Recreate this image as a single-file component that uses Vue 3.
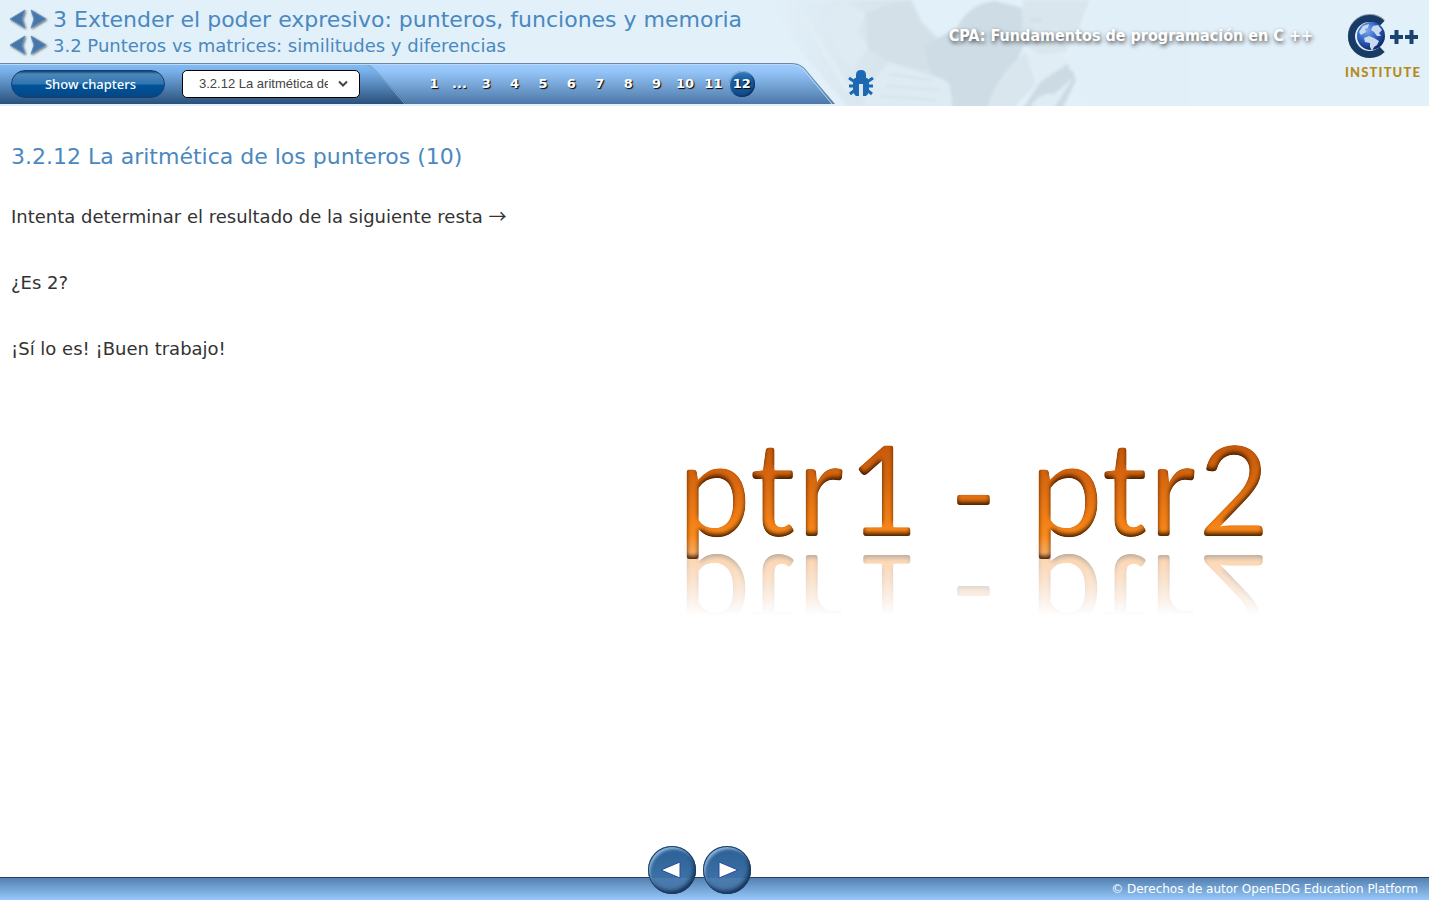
<script setup>
import { ref } from 'vue'

const pages = ['1', '...', '3', '4', '5', '6', '7', '8', '9', '10', '11', '12']
const current = ref('12')
const headings = [
  { level: 'chapter', text: '3 Extender el poder expresivo: punteros, funciones y memoria' },
  { level: 'section', text: '3.2 Punteros vs matrices: similitudes y diferencias' }
]
</script>

<template>
  <div class="page">
    <header class="header">
      <svg class="photo" width="430" height="106" viewBox="760 0 430 106" aria-hidden="true">
        <defs>
          <linearGradient id="fade">
            <stop offset="0" stop-color="#d9e5ed" stop-opacity="0" />
            <stop offset=".5" stop-color="#d7e4ec" />
            <stop offset="1" stop-color="#d3e0e9" />
          </linearGradient>
          <filter id="soft"><feGaussianBlur stdDeviation="1.500" /></filter>
        </defs>
        <g filter="url(#soft)">
          <path d="M770 0H912L922 22 938 38 957 30 1000 40V110H850L800 50Z" fill="url(#fade)" />
          <path d="M842 0 866 14 858 30 868 48 852 70 836 50 828 20Z" fill="#dfebf3" />
          <path d="M866 14 890 4 908 0 922 26 935 42 925 70 888 62 868 48Z" fill="#d3e0e8" />
          <path d="M957 28Q968 4 995 1L1022 8 1024 46 1014 66 986 110H953L950 84 930 72 925 45Z" fill="#cedce5" />
          <path d="M1023 0H1090L1078 30 1066 52 1040 54 1022 44Z" fill="#d9e6ee" />
          <path d="M1030 20h12M1032 36q8 4 16 0" stroke="#d0dee7" stroke-width="3" fill="none" />
          <path d="M1026 52L1036 84 1012 110H986Q994 84 1012 64Z" fill="#d9e6ee" />
          <path d="M1040 82L1070 62 1076 80 1062 110H1022Z" fill="#ccdae3" />
          <path d="M1026 52 1038 82 1068 64 1062 52 1046 54Z" fill="#e0edf5" />
          <path d="M1074 77L1054 108H1030Q1038 92 1054 94Z" fill="#dfecf4" />
          <path d="M888 62 945 80Q952 86 952 110H860L870 84 876 78Z" fill="#deebf3" />
          <path d="M890 74 930 80M886 86 940 90M880 96 936 100" stroke="#d3e1e9" stroke-width="2" fill="none" />
          <path d="M1078 46Q1064 56 1070 70L1078 74 1076 92Q1088 106 1112 110H1190V-4H1096Z" fill="#e1eff8" />
          <path d="M800 10 848 90" stroke="#e1eef6" stroke-width="5" fill="none" />
        </g>
      </svg>

      <div class="header-top">
        <div class="headings">
          <div v-for="h in headings" :key="h.level" class="heading-row">
            <button class="arrow" type="button" aria-label="Previous">
              <svg width="20" height="24" viewBox="0 0 20 24">
                <path class="arrow-shape" d="M17 3 14 12l3 9L2 12z" />
              </svg>
            </button>
            <button class="arrow" type="button" aria-label="Next">
              <svg width="20" height="24" viewBox="0 0 20 24">
                <path class="arrow-shape" d="M1 3 16 12 1 21l3-9z" />
              </svg>
            </button>
            <a href="#" :class="h.level">{{ h.text }}</a>
          </div>
        </div>
        <div class="course">CPA: Fundamentos de programación en C ++</div>
        <a class="logo" href="#" aria-label="C++ Institute">
          <svg width="80" height="52" viewBox="0 0 80 52">
            <defs>
              <radialGradient id="globe" cx=".35" cy=".3" r=".7">
                <stop offset="0" stop-color="#7fabee" />
                <stop offset=".55" stop-color="#2f62c4" />
                <stop offset="1" stop-color="#122c72" />
              </radialGradient>
            </defs>
            <path d="M37.500 9.500A18.500 18.500 0 1 0 37.500 36.500" fill="none" stroke="#8493a4" stroke-width="7" />
            <path d="M37 10.500A18 18 0 1 0 37 36.500" fill="none" stroke="#173b66" stroke-width="7" />
            <circle cx="26" cy="23" r="14" fill="url(#globe)" />
            <path d="M14 19l4-6 6-2-1 4-3 1 1 3-5 3zM19 25l5-2 5 2 5 3-2 4-3 2-2 4-2-4v-4l-5-1zM26 17l2-4 5-1 4 5-3 3 2 3-4 0-3-4z" fill="#c9d9f0" />
            <path d="M45 24H58M51.500 17V31M60 24H73M66.500 17V31" stroke="#1b4370" stroke-width="4" />
          </svg>
          <span class="institute"><i v-for="(c, i) in 'INSTITUTE'" :key="i">{{ c }}</i></span>
        </a>
      </div>

      <div class="toolbar">
        <svg class="toolbar-shape" width="840" height="41" viewBox="0 0 840 41" aria-hidden="true">
          <defs>
            <linearGradient id="light" x2="0" y2="1">
              <stop offset="0" stop-color="#9cccff" />
              <stop offset=".2" stop-color="#95c5f8" />
              <stop offset="1" stop-color="#4b78a8" />
            </linearGradient>
            <linearGradient id="dark" x2="0" y2="1">
              <stop offset="0" stop-color="#83bdf8" />
              <stop offset=".2" stop-color="#78b0e9" />
              <stop offset="1" stop-color="#29507b" />
            </linearGradient>
          </defs>
          <path d="M0 0H792Q799 0 804 5L835 41H0Z" fill="url(#light)" />
          <path d="M0 0H364Q371 1 376 7L406 41H0Z" fill="url(#dark)" />
          <path d="M364 1Q371 2 376 8L405 41" fill="none" stroke="#86a3c2" stroke-width="1" />
          <path d="M0 .5H792Q799 .5 804 5L834 41" fill="none" stroke="#71899f" stroke-width="1" />
          <path d="M0 1.500H791Q798 1.500 803 6L832 41" fill="none" stroke="#b9d9f6" stroke-width="1" />
        </svg>
        <button class="chapters" type="button">Show chapters</button>
        <label class="picker">
          <select aria-label="Page">
            <option>3.2.12 La aritmética de los punteros (10)</option>
          </select>
          <svg width="10" height="8" viewBox="0 0 10 8" aria-hidden="true">
            <path d="M1 1.500 5 5.500 9 1.500" fill="none" stroke="#444" stroke-width="2" />
          </svg>
        </label>
        <nav class="pages" aria-label="Pages">
          <a v-for="p in pages" :key="p" href="#" :class="{ active: p === current }" @click.prevent="current = p">{{ p }}</a>
        </nav>
        <button class="bug" type="button" aria-label="Report a bug">
          <svg width="26" height="28" viewBox="0 0 26 28">
            <path d="M8 9V5Q8 0 13 0T18 5V9Z" fill="#1c68b3" />
            <path d="M7 8H19Q21 9 21 13V19Q21 24 18 26H15V14H11V26H8Q5 24 5 19V13Q5 9 7 8Z" fill="#1c68b3" />
            <path d="M7 12 1 8M7 16H1M7 20 2 24M19 12 25 8M19 16H25M19 20 24 24" stroke="#1c68b3" stroke-width="3" />
          </svg>
        </button>
      </div>
    </header>

    <main class="content">
      <section class="copy">
        <h1>3.2.12 La aritmética de los punteros (10)</h1>
        <p>Intenta determinar el resultado de la siguiente resta <span class="sym">→</span></p>
        <p>¿Es 2?</p>
        <p>¡Sí lo es! ¡Buen trabajo!</p>
      </section>
      <section class="figure">
        <div class="formula">
          <svg width="620" height="190" viewBox="675 390 620 190">
            <defs>
              <linearGradient id="orange" gradientUnits="userSpaceOnUse" x1="0" y1="440" x2="0" y2="560">
                <stop offset="0" stop-color="#c4570b" />
                <stop offset=".35" stop-color="#d9690f" />
                <stop offset=".8" stop-color="#fc8a1a" />
                <stop offset="1" stop-color="#f2b780" />
              </linearGradient>
              <filter id="bevel" filterUnits="userSpaceOnUse" x="675" y="390" width="620" height="190" color-interpolation-filters="sRGB">
                <feGaussianBlur in="SourceAlpha" stdDeviation="1.500" />
                <feComponentTransfer result="round">
                  <feFuncA type="linear" slope="4" intercept="-1.500" />
                </feComponentTransfer>
                <feComposite in="SourceGraphic" in2="round" operator="in" result="body" />
                <feComponentTransfer in="round">
                  <feFuncA type="table" tableValues="1 0" />
                </feComponentTransfer>
                <feGaussianBlur stdDeviation="2" />
                <feOffset dy="-3" result="shade" />
                <feFlood flood-color="#3a1800" flood-opacity=".95" />
                <feComposite in2="shade" operator="in" />
                <feComposite in2="body" operator="in" result="inner" />
                <feMerge>
                  <feMergeNode in="body" />
                  <feMergeNode in="inner" />
                </feMerge>
              </filter>
            </defs>
            <g class="letters" fill="url(#orange)" filter="url(#bevel)">
              <text x="677" y="536">ptr1</text>
              <text x="952" y="540">-</text>
              <text x="1029" y="536">ptr2</text>
            </g>
          </svg>
        </div>
      </section>
    </main>

    <footer class="footer">
      <div class="pager">
        <button type="button" aria-label="Previous page">
          <svg width="24" height="20" viewBox="0 0 24 20"><path d="M1 10 20 2V18Z" fill="#fff" stroke="#2b4c94" stroke-width="1" /></svg>
        </button>
        <button type="button" aria-label="Next page">
          <svg width="24" height="20" viewBox="0 0 24 20"><path d="M23 10 4 2V18Z" fill="#fff" stroke="#2b4c94" stroke-width="1" /></svg>
        </button>
      </div>
      <span class="copyright">© Derechos de autor OpenEDG Education Platform</span>
    </footer>
  </div>
</template>

<style>
body {
  margin: 0;
  background: #fff;
}
</style>

<style scoped>
.page {
  display: flex;
  flex-direction: column;
  box-sizing: border-box;
  min-height: 100vh;
  padding-bottom: 2px;
  font-family: Verdana, "DejaVu Sans", sans-serif;
  color: #333;
}
button {
  border: 0;
  padding: 0;
  background: none;
  cursor: pointer;
}
a {
  text-decoration: none;
}
svg {
  display: block;
}
.header {
  position: relative;
  background: #e2f0f9;
  padding-bottom: 2px;
}
.photo {
  position: absolute;
  top: 0;
  left: 760px;
}
.header-top {
  position: relative;
  display: flex;
  height: 63px;
}
.headings {
  display: flex;
  flex-direction: column;
  flex: 1;
  padding: 6px 0 0 8px;
}
.heading-row {
  display: flex;
  align-items: center;
  height: 26px;
}
.arrow {
  width: 20px;
  margin-right: 2px;
}
.arrow-shape {
  fill: #4477ab;
  stroke: #6d93b8;
  stroke-width: 1px;
  filter: drop-shadow(1px 1px 1px rgba(0, 0, 0, .5));
}
.heading-row a {
  margin-left: 1px;
  color: #4a88c0;
  white-space: nowrap;
}
.chapter {
  font-size: 22px;
}
.section {
  font-size: 18px;
}
.course {
  padding: 26px 32px 0 0;
  font: bold 16px/20px Tahoma, "DejaVu Sans Condensed", "DejaVu Sans", sans-serif;
  color: #fff;
  white-space: nowrap;
  text-shadow: 1px 2px 4px #444;
}
.logo {
  width: 84px;
  padding-top: 13px;
}
.institute {
  display: flex;
  justify-content: space-between;
  width: 75px;
  font: 900 13px/14px Lato, sans-serif;
  color: #b58a17;
}
.institute i {
  font-style: normal;
}
.toolbar {
  position: relative;
  display: flex;
  align-items: center;
  height: 41px;
}
.toolbar-shape {
  position: absolute;
  top: 0;
  left: 0;
}
.chapters {
  position: relative;
  width: 154px;
  height: 28px;
  margin: 0 17px 0 11px;
  padding-left: 5px;
  border: 1px solid #123f74;
  border-radius: 14px;
  background: linear-gradient(#123f74 0, #4d87b9 12%, #2f74b0 50%, #00549b 54%, #064684 100%);
  font: 500 13px/20px "Noto Sans", sans-serif;
  color: #fff;
}
.picker {
  position: relative;
  display: flex;
  align-items: center;
}
.picker select {
  appearance: none;
  width: 178px;
  height: 28px;
  padding: 0 31px 0 16px;
  border: 1px solid #000;
  border-radius: 5px;
  background: #fff;
  font: 13px/20px Arial, "Liberation Sans", sans-serif;
  color: #444;
}
.picker svg {
  position: absolute;
  right: 12px;
  pointer-events: none;
}
.pages {
  position: relative;
  display: grid;
  grid-template-columns: 26px 25px repeat(10, 1fr);
  align-items: center;
  justify-items: center;
  width: 335px;
  margin-left: 61px;
}
.pages a {
  width: 26px;
  font: bold 13px/26px Verdana, "DejaVu Sans", sans-serif;
  text-align: center;
  color: #fff;
  text-shadow: 1px 1px 1px #000;
}
.pages .active {
  border-radius: 50%;
  background: linear-gradient(#3c7fc0, #1a61a9 30%, #0f4a88);
  box-shadow: inset 1px 1px 1px #9ab8d5, inset -1px -1px 2px #0c2c55;
}
.bug {
  position: relative;
  margin-left: 92px;
}
.content {
  display: grid;
  grid-template-columns: 665fr 764fr;
  flex: 1;
}
.copy {
  padding: 36px 11px 0;
}
h1 {
  margin: 0 0 32px;
  font-size: 22px;
  font-weight: normal;
  line-height: 30px;
  color: #4a88c0;
}
p {
  margin: 0 0 40px;
  font-size: 18px;
  line-height: 26px;
  white-space: nowrap;
}
.sym {
  font-family: "Noto Sans CJK SC", sans-serif;
  line-height: 20px;
}
.figure {
  padding: 284px 0 0 10px;
}
.formula {
  width: 620px;
  height: 190px;
  -webkit-box-reflect: below -69px linear-gradient(transparent 45%, rgba(0, 0, 0, .4) 80%);
}
.letters {
  font: 140px Calibri, Carlito, Lato, sans-serif;
}
.footer {
  position: relative;
  display: flex;
  justify-content: flex-end;
  box-sizing: border-box;
  height: 23px;
  padding-right: 11px;
  border-top: 1px solid #27405e;
  background: linear-gradient(#5381b1, #96c8fb);
}
.copyright {
  font: 12px/22px Verdana, "DejaVu Sans", sans-serif;
  color: #fff;
}
.pager {
  position: absolute;
  bottom: 6px;
  left: calc(50% - 67px);
  display: flex;
  gap: 7px;
}
.pager button {
  display: flex;
  align-items: center;
  justify-content: center;
  width: 48px;
  height: 48px;
  border-radius: 50%;
  background: linear-gradient(#2c5f95, #3b71a6 66%, #4c7cae 67%, #4575a8);
  box-shadow: inset 0 0 0 1px #1d3b66, inset 2px 3px 3px #8fb9dd, inset -2px -3px 4px #132f55;
}
</style>
